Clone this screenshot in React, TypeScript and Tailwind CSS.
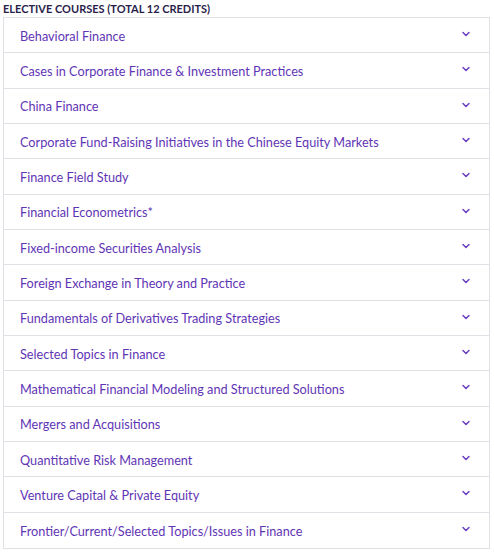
import { ChevronDown } from "lucide-react";

const courses = [
  "Behavioral Finance",
  "Cases in Corporate Finance & Investment Practices",
  "China Finance",
  "Corporate Fund-Raising Initiatives in the Chinese Equity Markets",
  "Finance Field Study",
  "Financial Econometrics*",
  "Fixed-income Securities Analysis",
  "Foreign Exchange in Theory and Practice",
  "Fundamentals of Derivatives Trading Strategies",
  "Selected Topics in Finance",
  "Mathematical Financial Modeling and Structured Solutions",
  "Mergers and Acquisitions",
  "Quantitative Risk Management",
  "Venture Capital & Private Equity",
  "Frontier/Current/Selected Topics/Issues in Finance",
];

export default function App() {
  return (
    <div className="w-[494px] h-[552px] bg-white pl-[3px] pr-[4px] pt-[2px] font-['Lato',sans-serif]">
      <p className="text-[11px] leading-[13px] font-bold text-[#2a1e4a] h-[15px]">
        ELECTIVE COURSES (TOTAL 12 CREDITS)
      </p>
      <div className="border border-[#e2e0e6]">
        {courses.map((name, i) => (
          <div
            key={i}
            className={
              "h-[35.33px] flex items-center justify-between pl-[16px] pr-[17px] pt-[2px] " +
              (i < courses.length - 1 ? "border-b border-[#e2e0e6]" : "")
            }
          >
            <span className="text-[12.7px] text-[#5f35b5]">{name}</span>
            <ChevronDown className="size-[12px] text-[#6a3fc0] -mt-[4px]" strokeWidth={3} />
          </div>
        ))}
      </div>
    </div>
  );
}
